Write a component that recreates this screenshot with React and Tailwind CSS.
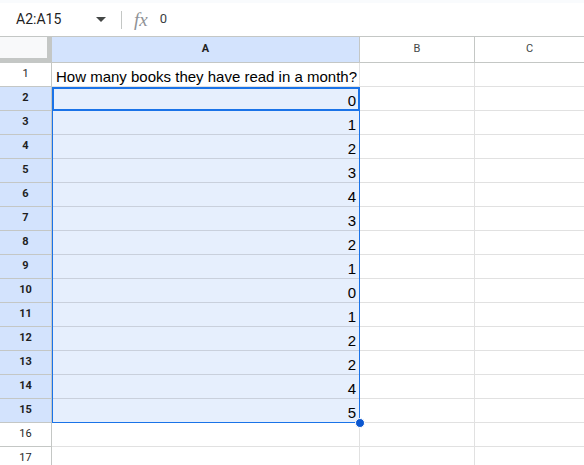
import React from 'react';

const values = [0, 1, 2, 3, 4, 3, 2, 1, 0, 1, 2, 2, 4, 5];

const cellFont = { fontFamily: '"Liberation Sans", Arial, sans-serif' };
const uiFont = { fontFamily: 'Roboto, "Liberation Sans", Arial, sans-serif' };

const FormulaBar = () => (
  <div className="h-[36px] bg-white flex flex-col">
    <div className="h-[3px] bg-[#f9fbfd]" />
    <div className="flex-1 flex items-center" style={uiFont}>
      <div className="w-[88px] pl-[16px] text-[14px] text-[#1f1f1f]">A2:A15</div>
      <svg width="10" height="5" viewBox="0 0 10 5" className="ml-[8px]">
        <path d="M0 0h10L5 5z" fill="#444746" />
      </svg>
      <div className="ml-[15px] w-px h-[18px] bg-[#c4c7c5]" />
      <span
        className="ml-[12px] text-[19px] leading-[20px] italic text-[#8f9296]"
        style={{ fontFamily: '"Liberation Serif", serif' }}
      >
        fx
      </span>
      <span className="ml-[12px] mb-[2px] text-[13px] text-[#3c4043]">0</span>
    </div>
  </div>
);

const Row = ({ num, text, selected }) => (
  <>
    <div
      className={`h-[24px] border-r border-b border-[#c4c7c5] flex items-center justify-center text-[11px] text-[#1f1f1f] ${
        selected ? 'bg-[#d3e3fd] font-bold' : 'bg-white'
      }`}
      style={uiFont}
    >
      {num}
    </div>
    <div
      className={`h-[24px] border-r border-b flex items-end pb-0 text-[15px] text-black leading-[18px] ${
        selected ? 'bg-[#e6effd] border-[#c9d0dc] justify-end pr-[3px]' : 'bg-white border-[#e1e1e1] pl-[4px]'
      }`}
      style={cellFont}
    >
      {text}
    </div>
    <div className="h-[24px] border-r border-b border-[#e1e1e1]" />
    <div className="h-[24px] border-b border-[#e1e1e1]" />
  </>
);

export default function App() {
  return (
    <div className="w-[584px] h-[465px] overflow-hidden bg-white">
      <FormulaBar />
      <div className="relative">
        <div className="grid grid-cols-[52px_308px_115px_1fr] border-t border-[#c4c7c5]">
          <div className="h-[26px] bg-[#f8f9fa] border-r-[5px] border-b-[5px] border-[#c4c7c5]" />
          <div
            className="h-[26px] bg-[#d3e3fd] border-r border-b border-[#c4c7c5] flex items-center justify-center text-[11px] font-bold text-[#1f1f1f]"
            style={uiFont}
          >
            A
          </div>
          <div
            className="h-[26px] border-r border-b border-[#c4c7c5] flex items-center justify-center text-[11px] text-[#444746]"
            style={uiFont}
          >
            B
          </div>
          <div
            className="h-[26px] border-b border-[#c4c7c5] flex items-center justify-center text-[11px] text-[#444746]"
            style={uiFont}
          >
            C
          </div>

          <Row num={1} text="How many books they have read in a month?" />
          {values.map((v, i) => (
            <Row key={i} num={i + 2} text={v} selected />
          ))}
          <Row num={16} text="" />
          <Row num={17} text="" />
        </div>

        {/* selection range A2:A15 */}
        <div className="absolute left-[52px] top-[51px] w-[308px] h-[336px] border border-[#1a73e8] pointer-events-none">
          <div className="absolute -left-px -top-px w-[308px] h-[24px] border-2 border-[#1a73e8]" />
          <div className="absolute -right-[6px] -bottom-[6px] w-[10px] h-[10px] rounded-full bg-[#0b57d0] border border-white" />
        </div>
      </div>
    </div>
  );
}
